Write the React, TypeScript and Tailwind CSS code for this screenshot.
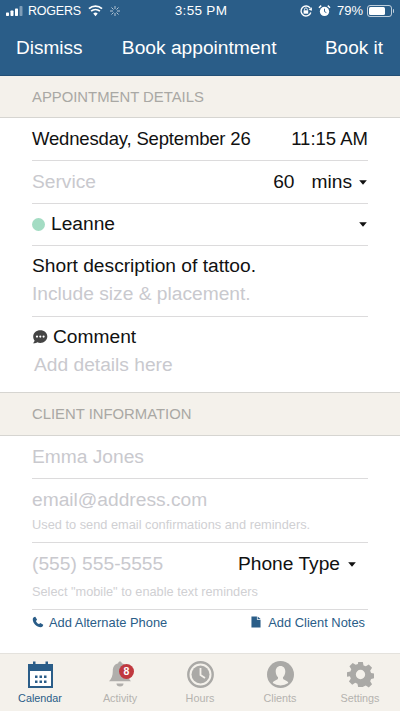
const font = { fontFamily: '"Liberation Sans", Arial, sans-serif' };

const Caret = ({ className = "" }: { className?: string }) => (
  <svg width="8" height="5" viewBox="0 0 8 5" className={className}>
    <path d="M0.2 0.2h7.6L4 4.800z" fill="#111" />
  </svg>
);

const Tab = ({ label, active, children }: { label: string; active?: boolean; children: React.ReactNode }) => (
  <div className="flex w-[80px] flex-col items-center">
    <div className="relative flex h-[28px] w-[30px] items-center justify-center">{children}</div>
    <span className={`mt-[3px] text-[10.800px] leading-[14px] ${active ? "text-[#2a5d88]" : "text-[#b5b3af]"}`}>{label}</span>
  </div>
);

export default function App() {
  return (
    <div className="flex h-[711px] w-[400px] flex-col overflow-hidden bg-white" style={font}>
      {/* Header */}
      <div className="h-[76px] shrink-0 border-b border-[#234f75] bg-[#2a5d88] text-white">
        <div className="flex h-[22px] items-center justify-between pl-[6px] pr-[6px] text-[12px]">
          <div className="flex items-center">
            <svg width="18" height="10" viewBox="0 0 18 10">
              <rect x="0" y="6.500" width="3" height="3.500" rx="0.700" fill="#fff" />
              <rect x="4.500" y="4.500" width="3" height="5.500" rx="0.700" fill="#fff" />
              <rect x="9" y="2.500" width="3" height="7.500" rx="0.700" fill="#fff" />
              <rect x="13.500" y="0" width="3" height="10" rx="0.700" fill="#fff" fillOpacity="0.400" />
            </svg>
            <span className="ml-[4px] text-[12.500px] tracking-[-0.200px]">ROGERS</span>
            <svg width="15" height="12" viewBox="0 0 16 12" className="ml-[7px]">
              <path d="M8 11.500 5.600 8.600a3.600 3.600 0 0 1 4.800 0zM3.900 6.900a6 6 0 0 1 8.200 0l1.200-1.400a8 8 0 0 0-10.600 0zM1.700 4.200a9.600 9.600 0 0 1 12.600 0L15.600 2.700a11.600 11.600 0 0 0-15.200 0z" fill="#fff" />
            </svg>
            <svg width="12" height="12" viewBox="0 0 12 12" className="ml-[6px]" stroke="#fff" strokeOpacity="0.650" strokeWidth="1">
              <path d="M6 1v3M6 8v3M1 6h3M8 6h3M2.500 2.500l2 2M7.500 7.500l2 2M9.500 2.500l-2 2M4.500 7.500l-2 2" />
            </svg>
          </div>
          <span className="absolute left-0 ml-[1px] w-[400px] text-center text-[13.500px] tracking-[0.300px]">3:55 PM</span>
          <div className="flex items-center">
            <svg width="14" height="14" viewBox="0 0 14 14" fill="none" stroke="#fff">
              <path d="M11.800 8.500A5 5 0 1 1 11.200 4.200" strokeWidth="1.400" />
              <path d="M12.900 3.200 12.900 6.800 9.600 5.800z" fill="#fff" stroke="none" />
              <rect x="4.600" y="6.300" width="4.600" height="3.400" fill="#fff" stroke="none" />
              <path d="M5.500 6.300V5.300a1.400 1.400 0 0 1 2.800 0v1" strokeWidth="0.900" />
            </svg>
            <svg width="13" height="14" viewBox="0 0 14 14" className="ml-[5px]">
              <circle cx="7" cy="7.500" r="5" fill="#fff" />
              <path d="M7 4.500v3.200l2 1" stroke="#2a5d88" strokeWidth="1" fill="none" />
              <path d="M1 3.500 3.500 1.200M13 3.500 10.500 1.200" stroke="#fff" strokeWidth="1.500" />
            </svg>
            <span className="ml-[6px] text-[13px]">79%</span>
            <div className="relative ml-[4px] mr-[2px] h-[12px] w-[25px] rounded-[3px] border border-white/70 p-[1px]">
              <div className="h-full w-[76%] rounded-[1.500px] bg-white" />
              <div className="absolute right-[-3px] top-[3px] h-[4px] w-[1.500px] rounded-r bg-white/70" />
            </div>
          </div>
        </div>
        <div className="flex h-[52px] items-center justify-between pl-[16px] pr-[17px] text-[19px]">
          <span>Dismiss</span>
          <span className="mr-[9px] text-[19.200px]">Book appointment</span>
          <span>Book it</span>
        </div>
      </div>

      {/* Appointment details */}
      <div className="flex h-[42px] shrink-0 items-center border-b border-[#d6d5d1] bg-[#f4f1eb] pl-[32px] pt-[2px] text-[14.850px] text-[#a9a8a4]">
        APPOINTMENT DETAILS
      </div>
      <div className="shrink-0 px-[32px]">
        <div className="flex h-[43px] items-center justify-between border-b-[1.500px] border-[#dcdbdc] text-[18.500px] text-[#111]">
          <span className="tracking-[-0.170px]">Wednesday, September 26</span>
          <span>11:15 AM</span>
        </div>
        <div className="flex h-[43px] items-center justify-between border-b-[1.500px] border-[#dcdbdc] pt-[1px] text-[19.200px]">
          <span className="text-[#c9c9ce]">Service</span>
          <div className="flex items-center pr-[1px] text-[#111]">
            <span>60</span>
            <span className="ml-[17px]">mins</span>
            <Caret className="ml-[7px]" />
          </div>
        </div>
        <div className="flex h-[42px] items-center justify-between border-b-[1.500px] border-[#dcdbdc] text-[19.200px] text-[#111]">
          <div className="flex items-center">
            <span className="h-[13px] w-[13px] rounded-full bg-[#a3dcc3]" />
            <span className="ml-[6px]">Leanne</span>
          </div>
          <Caret className="mr-[1px]" />
        </div>
        <div className="h-[71px] border-b-[1.500px] border-[#dcdbdc] pt-[6px] text-[19.200px] leading-[28px]">
          <div className="text-[#111]">Short description of tattoo.</div>
          <div className="text-[#c9c9ce]">Include size &amp; placement.</div>
        </div>
        <div className="h-[75px] pt-[6px] text-[19.200px] leading-[28px]">
          <div className="flex items-center text-[#111]">
            <svg width="16" height="16" viewBox="0 0 16 16">
              <path d="M8.300 1.200c4 0 7 2.700 7 6.300s-3 6.400-7 6.400c-1.100 0-2.100-.2-3-.6-1 .8-2.600 1.200-4.500 1 1-.6 1.600-1.600 1.800-2.700C1.700 10.500 1.200 9.100 1.200 7.500c0-3.600 3.100-6.300 7.100-6.300z" fill="#444" />
              <circle cx="5" cy="7.600" r="1.100" fill="#fff" />
              <circle cx="8.300" cy="7.600" r="1.100" fill="#fff" />
              <circle cx="11.600" cy="7.600" r="1.100" fill="#fff" />
            </svg>
            <span className="ml-[5px]">Comment</span>
          </div>
          <div className="pl-[2px] text-[#c9c9ce]">Add details here</div>
        </div>
      </div>

      {/* Client information */}
      <div className="flex h-[44px] shrink-0 items-center border-y border-[#d6d5d1] bg-[#f4f1eb] pl-[32px] pt-[1px] text-[14.850px] text-[#a9a8a4]">
        CLIENT INFORMATION
      </div>
      <div className="shrink-0 px-[32px]">
        <div className="flex h-[43px] items-center border-b-[1.500px] border-[#dcdbdc] text-[19.200px] text-[#c9c9ce]">Emma Jones</div>
        <div className="h-[64px] border-b-[1.500px] border-[#dcdbdc] pt-[8px]">
          <div className="text-[19.200px] leading-[26px] text-[#c9c9ce]">email@address.com</div>
          <div className="mt-[4px] text-[12.800px] leading-[16px] text-[#d0d0d3]">Used to send email confirmations and reminders.</div>
        </div>
        <div className="h-[67px] border-b-[1.500px] border-[#dcdbdc] pt-[8px]">
          <div className="flex items-center justify-between pr-[12px] text-[19.200px] leading-[26px]">
            <span className="text-[#c9c9ce]">(555) 555-5555</span>
            <div className="flex items-center text-[#111]">
              <span>Phone Type</span>
              <Caret className="ml-[8px]" />
            </div>
          </div>
          <div className="mt-[7px] text-[12.750px] leading-[16px] text-[#d0d0d3]">Select "mobile" to enable text reminders</div>
        </div>
        <div className="flex h-[25px] items-center justify-between pr-[3px] text-[12.900px] text-[#2a5d88]">
          <div className="flex items-center">
            <svg width="12" height="12" viewBox="0 0 24 24" fill="#2a5d88">
              <path d="M6.600 1.500 10.200 7.300 7.900 9.800c1.100 2.700 3.500 5.200 6.300 6.400l2.500-2.300 5.800 3.600c-.3 2.600-2.300 4.900-5 5C9.200 22.500 1.500 14.800 1.500 6.600c.1-2.700 2.400-4.800 5.100-5.100z" />
            </svg>
            <span className="ml-[5px]">Add Alternate Phone</span>
          </div>
          <div className="flex items-center">
            <svg width="10" height="12" viewBox="0 0 11 12" fill="#2a5d88">
              <path d="M0.500 0h6v3.500h4V12h-10z" />
              <path d="M7.300 0l3.200 2.800H7.300z" />
            </svg>
            <span className="ml-[7px]">Add Client Notes</span>
          </div>
        </div>
      </div>

      {/* Tab bar */}
      <div className="mt-auto flex h-[58px] shrink-0 items-start justify-between border-t border-[#e4e2dd] bg-[#f4f1eb] pt-[6px]">
        <Tab label="Calendar" active>
          <svg width="25" height="27" viewBox="0 0 25 27">
            <path d="M1 4h23v22H1z" fill="#fff" stroke="#2a5d88" strokeWidth="2" />
            <path d="M0 3h25v7H0z" fill="#2a5d88" />
            <rect x="5" y="0.500" width="2.500" height="5" fill="#2a5d88" />
            <rect x="17.500" y="0.500" width="2.500" height="5" fill="#2a5d88" />
            {[7, 11.500, 16].map((x) => (
              <g key={x} fill="#2a5d88">
                <rect x={x} y="14.500" width="2.500" height="2.500" />
                <rect x={x} y="19.500" width="2.500" height="2.500" />
              </g>
            ))}
          </svg>
        </Tab>
        <Tab label="Activity">
          <svg width="24" height="27" viewBox="0 0 24 27">
            <path d="M12 0.500c1 0 1.700.7 1.800 1.700 3.700.8 5.400 3.700 5.400 7.800 0 4.500 1.200 7.800 3.800 10.300H1c2.600-2.500 3.800-5.800 3.800-10.300 0-4.100 1.700-7 5.400-7.800.1-1 .8-1.700 1.800-1.700z" fill="#b0aeab" />
            <path d="M8.500 22.500h7a3.500 3 0 0 1-7 0z" fill="#b0aeab" />
          </svg>
          <span className="absolute right-[1px] top-[4px] flex h-[15px] w-[15px] items-center justify-center rounded-full bg-[#c0393f] text-[10.500px] font-bold leading-none text-white">8</span>
        </Tab>
        <Tab label="Hours">
          <svg width="27" height="27" viewBox="0 0 27 27" fill="none" stroke="#aaa9a6">
            <circle cx="13.500" cy="13.500" r="12.200" strokeWidth="2.400" />
            <circle cx="13.500" cy="13.500" r="9" fill="#aaa9a6" stroke="none" />
            <path d="M13.500 7v7l4.500 3" stroke="#f4f1eb" strokeWidth="1.800" />
          </svg>
        </Tab>
        <Tab label="Clients">
          <svg width="27" height="27" viewBox="0 0 27 27">
            <circle cx="13.500" cy="13.500" r="13.500" fill="#aaa9a6" />
            <path d="M13.500 5c3.100 0 4.800 2.500 4.800 5.400 0 2.500-1 4.500-2.200 5.700-.4 1.200 0 2 1.300 2.700l2.700 1.500c.7.500 1.100 1.100 1.200 1.800a13.500 13.500 0 0 1-15.600 0c.1-.7.500-1.300 1.200-1.800l2.700-1.500c1.300-.7 1.700-1.500 1.300-2.700-1.200-1.200-2.200-3.200-2.200-5.700C8.700 7.500 10.400 5 13.500 5z" fill="#f4f1eb" />
          </svg>
        </Tab>
        <Tab label="Settings">
          <svg width="27" height="27" viewBox="-1 -1 29 29">
            <path
              fillRule="evenodd"
              d="M11 0h5l.8 3.700 2.400 1 3.200-2 3.500 3.500-2 3.200 1 2.400 3.600.7v5l-3.600.8-1 2.400 2 3.200-3.500 3.500-3.200-2-2.400 1L16 27h-5l-.8-3.600-2.400-1-3.200 2-3.500-3.500 2-3.200-1-2.400L-1 16v-5l3.600-.8 1-2.400-2-3.200 3.500-3.500 3.200 2 2.400-1zM13.500 8.500a5 5 0 1 0 0 10 5 5 0 0 0 0-10z"
              fill="#aaa9a6"
            />
          </svg>
        </Tab>
      </div>
    </div>
  );
}
